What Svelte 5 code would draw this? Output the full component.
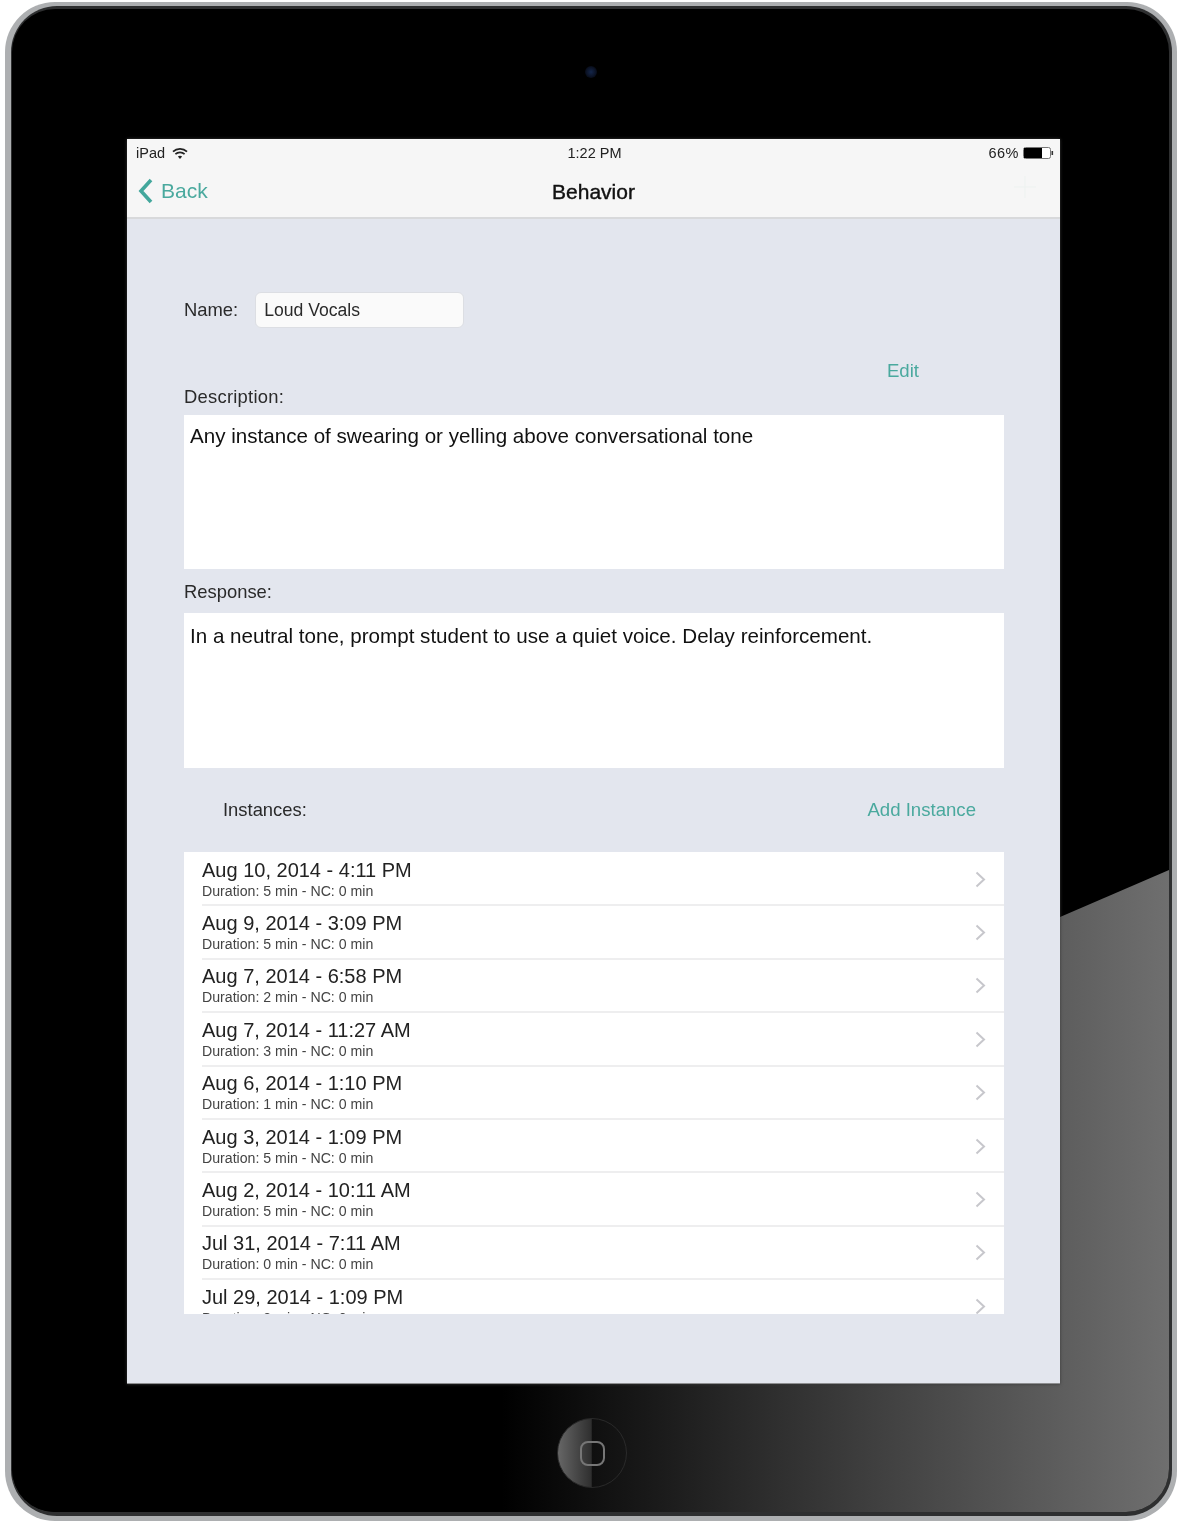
<script lang="ts">
    const instances = [
        { date: "Aug 10, 2014 - 4:11 PM", duration: 5, nc: 0 },
        { date: "Aug 9, 2014 - 3:09 PM", duration: 5, nc: 0 },
        { date: "Aug 7, 2014 - 6:58 PM", duration: 2, nc: 0 },
        { date: "Aug 7, 2014 - 11:27 AM", duration: 3, nc: 0 },
        { date: "Aug 6, 2014 - 1:10 PM", duration: 1, nc: 0 },
        { date: "Aug 3, 2014 - 1:09 PM", duration: 5, nc: 0 },
        { date: "Aug 2, 2014 - 10:11 AM", duration: 5, nc: 0 },
        { date: "Jul 31, 2014 - 7:11 AM", duration: 0, nc: 0 },
        { date: "Jul 29, 2014 - 1:09 PM", duration: 3, nc: 0 }
    ]
</script>

<div class="device">
    <div class="bezel">
        <div class="glass">
            <div class="glare"></div>
            <div class="top">
                <span class="camera"></span>
            </div>

            <main class="screen">
                <header class="chrome">
                    <div class="status">
                        <div class="status-left">
                            <span>iPad</span>
                            <svg width="16" height="13" viewBox="0 0 16 13" fill="none" stroke="#222">
                                <path d="M1 4.600C4.900 .9 11.100 .9 15 4.600" stroke-width="1.7" />
                                <path d="M3.400 7.200C5.900 4.800 10.100 4.800 12.600 7.200" stroke-width="1.7" />
                                <path d="M5.900 9.600C7 8.600 9 8.600 10.100 9.600L8 12Z" fill="#222" stroke="none" />
                            </svg>
                        </div>
                        <span class="time">1:22 PM</span>
                        <div class="status-right">
                            <span>66%</span>
                            <svg width="31" height="12" viewBox="0 0 31 12">
                                <rect x=".5" y=".5" width="27" height="11" rx="2" fill="#fff" stroke="#777" />
                                <rect x="1" y="1" width="18" height="10" fill="#000" />
                                <rect x="28.500" y="4" width="1.600" height="4" fill="#333" />
                            </svg>
                        </div>
                    </div>
                    <nav class="nav">
                        <div class="back">
                            <svg width="16" height="26" viewBox="0 0 16 26" fill="none" stroke="#43a79c" stroke-width="3.600">
                                <path d="M14 2 4 13l10 11" />
                            </svg>
                            <span>Back</span>
                        </div>
                        <h1>Behavior</h1>
                        <svg class="plus" width="22" height="22" viewBox="0 0 22 22" stroke="#edf2f0" stroke-width="1">
                            <path d="M11 0v22M0 11h22" />
                        </svg>
                    </nav>
                </header>

                <div class="content">
                    <div class="name-row">
                        <span class="label">Name:</span>
                        <div class="name-field">Loud Vocals</div>
                    </div>

                    <div class="edit-row"><span class="link">Edit</span></div>
                    <div class="label desc-label">Description:</div>
                    <div class="textbox">Any instance of swearing or yelling above conversational tone</div>

                    <div class="label resp-label">Response:</div>
                    <div class="textbox resp">In a neutral tone, prompt student to use a quiet voice. Delay reinforcement.</div>

                    <div class="instances-head">
                        <span class="label">Instances:</span>
                        <span class="link">Add Instance</span>
                    </div>

                    <ul class="list">
                        {#each instances as item}
                            <li>
                                <div class="row">
                                    <div>
                                        <div class="date">{item.date}</div>
                                        <div class="meta">Duration: {item.duration} min - NC: {item.nc} min</div>
                                    </div>
                                    <svg class="chevron" width="11" height="17" viewBox="0 0 11 17" fill="none" stroke="#c7c7cc" stroke-width="2">
                                        <path d="M1.500 1.500 9 8.500l-7.500 7" />
                                    </svg>
                                </div>
                            </li>
                        {/each}
                    </ul>
                </div>
            </main>

            <div class="bottom">
                <div class="home">
                    <span class="home-square"></span>
                </div>
            </div>
        </div>
    </div>
</div>

<style>
    :global(body) {
        background: #fff;
        overflow: hidden;
    }

    .device {
        box-sizing: border-box;
        width: 1172px;
        height: 1519px;
        margin: 2px 0 0 5px;
        padding: 4px 5px 5px 6px;
        border-radius: 50px;
        background: #adafb1;
        font-family: "Liberation Sans", Arial, sans-serif;
    }

    .bezel {
        box-sizing: border-box;
        height: 100%;
        padding: 3px 3px 4px 1px;
        border-radius: 46px;
        background: #2e2f30;
    }

    .glass {
        position: relative;
        box-sizing: border-box;
        height: 100%;
        border-radius: 43px;
        background: #000;
        overflow: hidden;
        display: flex;
        flex-direction: column;
    }

    /* light reflection across the lower right of the glass */
    .glare {
        position: absolute;
        inset: 0;
        background: linear-gradient(90deg, #000 0, #000 490px, #3f3f3f 860px, #6f6f6f 1158px);
        clip-path: polygon(100% 861px, 100% 100%, 0 100%, 0 1360px);
    }

    .top {
        position: relative;
        flex: 0 0 130px;
        display: flex;
        justify-content: center;
        padding: 57px 0 0 1px;
        box-sizing: border-box;
    }

    .camera {
        width: 12px;
        height: 12px;
        border-radius: 50%;
        background: radial-gradient(circle, #14264a 0, #0c1428 50%, #000 100%);
    }

    .screen {
        position: relative;
        box-sizing: border-box;
        width: 933px;
        height: 1245px;
        margin-left: 115px;
        background: #e3e6ee;
        border-bottom: 1px solid #8d8e90;
        box-shadow: 0 0 3px #3a3a3a;
        filter: blur(0.45px);
    }

    .chrome {
        box-sizing: border-box;
        height: 80px;
        background: #f6f6f6;
        border-bottom: 2px solid #d8d9db;
    }

    .status {
        display: grid;
        grid-template-columns: 1fr auto 1fr;
        align-items: center;
        height: 28px;
        padding: 0 6px 0 9px;
        font-size: 14.500px;
        color: #222;
    }

    .status-left {
        display: flex;
        align-items: center;
        gap: 7px;
    }

    .status-right {
        display: flex;
        align-items: center;
        justify-content: flex-end;
        gap: 4px;
    }

    .status-right span {
        letter-spacing: 0.5px;
    }

    .time {
        padding-right: 1px;
    }

    .nav {
        position: relative;
        display: flex;
        justify-content: center;
        align-items: center;
        height: 50px;
    }

    .nav h1 {
        margin: 0 0 1px;
        font-size: 21px;
        font-weight: 400;
        -webkit-text-stroke: 0.4px #111;
        color: #111;
    }

    .back {
        position: absolute;
        left: 10px;
        top: 11px;
        display: flex;
        align-items: center;
        gap: 8px;
        font-size: 21px;
        color: #4aa99e;
    }

    .plus {
        position: absolute;
        right: 24px;
        top: 9px;
    }

    .content {
        padding: 73px 56px 0 57px;
    }

    .label {
        font-size: 18.400px;
        color: #2a2a2a;
    }

    .name-row {
        display: flex;
        align-items: center;
        gap: 17px;
    }

    .name-field {
        box-sizing: border-box;
        width: 209px;
        height: 36px;
        padding-left: 8px;
        line-height: 34px;
        font-size: 17.600px;
        color: #2a2a2a;
        background: #fafafa;
        border: 1px solid #dcdee3;
        border-radius: 6px;
    }

    .edit-row {
        display: flex;
        justify-content: flex-end;
        height: 20px;
        margin-top: 33px;
        padding-right: 85px;
        line-height: 20px;
    }

    .link {
        font-size: 18.600px;
        color: #4aa99e;
    }

    .desc-label {
        height: 20px;
        margin-top: 6px;
        line-height: 20px;
        letter-spacing: 0.25px;
    }

    .textbox {
        box-sizing: border-box;
        height: 154px;
        margin-top: 8px;
        padding: 9px 6px;
        font-size: 20.600px;
        line-height: 24px;
        color: #111;
        background: #fff;
    }

    .resp-label {
        height: 20px;
        margin-top: 13px;
        line-height: 20px;
    }

    .resp {
        height: 155px;
        margin-top: 11px;
        padding-top: 11px;
    }

    .instances-head {
        display: flex;
        justify-content: space-between;
        align-items: center;
        height: 20px;
        margin-top: 32px;
        padding: 0 28px 0 39px;
    }

    .list {
        box-sizing: border-box;
        height: 462px;
        margin: 32px 0 0;
        padding: 1px 0 0;
        list-style: none;
        background: #fff;
        overflow: hidden;
    }

    .row {
        box-sizing: border-box;
        display: flex;
        justify-content: space-between;
        align-items: center;
        height: 53.400px;
        margin-left: 18px;
        padding-right: 18px;
        border-bottom: 2px solid #eeeeef;
    }

    .date {
        font-size: 20px;
        line-height: 24px;
        color: #222;
    }

    .meta {
        font-size: 14.150px;
        line-height: 18px;
        color: #444;
    }

    .chevron {
        margin-top: 1px;
    }

    .bottom {
        position: relative;
        flex: 1;
        display: flex;
        justify-content: center;
        padding-top: 34px;
        box-sizing: border-box;
    }

    .home {
        position: relative;
        box-sizing: border-box;
        display: grid;
        place-items: center;
        width: 70px;
        height: 70px;
        border: 1px solid #2a2a2a;
        border-radius: 50%;
        background: linear-gradient(90deg, #666 0, #2f2f2f 49%, transparent 50%);
        margin-left: 3px;
    }

    .home-square {
        box-sizing: border-box;
        width: 25px;
        height: 25px;
        border: 2px solid #767676;
        border-radius: 8px;
    }
</style>
